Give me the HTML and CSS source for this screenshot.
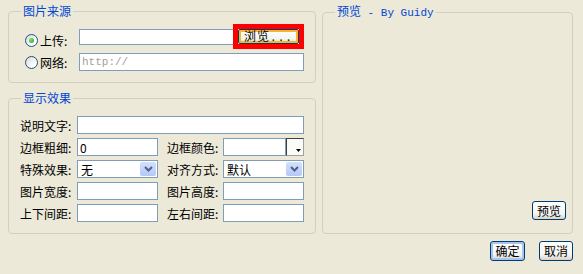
FILE: index.html
```html
<!DOCTYPE html>
<html lang="zh-CN">
<head>
    <meta charset="UTF-8">
    <title>插入图片</title>
    <link rel="stylesheet" href="styles.css">
</head>
<body>
    <div class="dialog">
        <div class="panes">
            <div class="left">
                <fieldset class="group source">
                    <legend>图片来源</legend>
                    <div class="row upload">
                        <label class="choice"><span class="dot on"></span>上传:</label>
                        <input type="text" class="field path">
                        <span class="mark"><button class="btn browse">浏览<span class="mono">...</span></button></span>
                    </div>
                    <div class="row">
                        <label class="choice"><span class="dot"></span>网络:</label>
                        <input type="text" class="field url" placeholder="http://">
                    </div>
                </fieldset>

                <fieldset class="group effect">
                    <legend>显示效果</legend>
                    <div class="grid">
                        <label>说明文字:</label>
                        <input type="text" class="field wide">

                        <label>边框粗细:</label>
                        <input type="text" class="field" value="0">
                        <label class="second">边框颜色:</label>
                        <div class="color">
                            <input type="text" class="field">
                            <span class="pick">
                                <svg width="5" height="3" viewBox="0 0 5 3"><path d="M0 0h5L2.5 3z" fill="#000"/></svg>
                            </span>
                        </div>

                        <label>特殊效果:</label>
                        <div class="select">
                            <span class="value">无</span>
                            <span class="drop"><svg width="9" height="6" viewBox="0 0 9 6"><path d="M1 1l3.5 3.5L8 1" fill="none" stroke="#4D6185" stroke-width="2"/></svg></span>
                        </div>
                        <label class="second">对齐方式:</label>
                        <div class="select">
                            <span class="value">默认</span>
                            <span class="drop"><svg width="9" height="6" viewBox="0 0 9 6"><path d="M1 1l3.5 3.5L8 1" fill="none" stroke="#4D6185" stroke-width="2"/></svg></span>
                        </div>

                        <label>图片宽度:</label>
                        <input type="text" class="field">
                        <label class="second">图片高度:</label>
                        <input type="text" class="field">

                        <label>上下间距:</label>
                        <input type="text" class="field">
                        <label class="second">左右间距:</label>
                        <input type="text" class="field">
                    </div>
                </fieldset>
            </div>

            <fieldset class="group preview">
                <legend>预览<span class="mono"> - By Guidy</span></legend>
                <button class="btn small">预览</button>
            </fieldset>
        </div>

        <div class="actions">
            <button class="btn small default">确定</button>
            <button class="btn small">取消</button>
        </div>
    </div>
</body>
</html>
```

FILE: styles.css
```css
body {
    margin: 0;
    background: #ECE9D8;
    font: 12px "Noto Sans CJK SC", sans-serif;
    color: #000;
}

.dialog {
    padding: 4px 10px 0 8px;
}

.panes {
    display: flex;
    gap: 6px;
}

.left {
    width: 308px;
    flex: none;
    display: flex;
    flex-direction: column;
    gap: 8px;
}

.mono {
    font-family: "Liberation Mono", monospace;
    font-size: 11px;
}

/* group boxes */
.group {
    margin: 0;
    padding: 0 11px;
    min-width: 0;
    border: 1px solid #D0D0BF;
    border-radius: 4px;
}

.group legend {
    margin-left: 1px;
    padding: 0 2px;
    line-height: 14px;
    color: #0046D5;
}

/* source */
.source {
    padding-bottom: 11px;
}

.row {
    display: flex;
    align-items: center;
}

.upload {
    margin-top: 6px;
    height: 25px;
}

.upload .choice {
    padding-top: 7px;
}

.row + .row {
    margin-top: 4px;
}

.choice {
    width: 59px;
    flex: none;
    display: flex;
    align-items: center;
}

.dot {
    width: 13px;
    height: 13px;
    margin: 0 2px 0 5px;
    box-sizing: border-box;
    border: 1px solid #1C5180;
    border-radius: 50%;
    background: linear-gradient(135deg, #D8D8D2, #FFFFFF 75%);
    display: grid;
    place-items: center;
}

.dot.on::after {
    content: "";
    width: 5px;
    height: 5px;
    border-radius: 50%;
    background: radial-gradient(circle at 35% 35%, #7CE07C, #21A121);
}

.field {
    height: 18px;
    box-sizing: border-box;
    margin: 0;
    padding: 0 2px;
    border: 1px solid #7F9DB9;
    background: #fff;
    font: inherit;
    min-width: 0;
}

.path {
    width: 160px;
    height: 16px;
}

.url {
    flex: 1;
    font-family: "Liberation Mono", monospace;
    font-size: 11px;
}

.url::placeholder {
    color: #A0A0A0;
}

.mark {
    margin-left: -4px;
    border: 5px solid #FF0000;
    display: flex;
}

/* buttons */
.btn {
    height: 20px;
    box-sizing: border-box;
    margin: 0;
    padding: 0 4px;
    border: 1px solid #003C74;
    border-radius: 3px;
    background: linear-gradient(#FFFFFF, #F4F4F0 70%, #D8D2C6);
    font: inherit;
    color: #000;
    line-height: 16px;
}

.browse {
    width: 61px;
    height: 15px;
    line-height: 12px;
    border-radius: 2px;
    box-shadow: inset 0 0 0 2px #F8B330;
    letter-spacing: 1px;
}

.small {
    width: 34px;
    padding: 0;
}

.default {
    width: 35px;
    box-shadow: inset 0 0 0 2px #A8C4F0;
}

/* effect */
.effect {
    padding-bottom: 11px;
}

.grid {
    margin-top: 11px;
    display: grid;
    grid-template-columns: 57px 81px 65px minmax(0, 1fr);
    grid-auto-rows: 18px;
    row-gap: 4px;
    align-items: center;
}

.grid .field,
.grid .select,
.grid .color {
    width: 100%;
}

.wide {
    grid-column: 2 / 5;
}

.second {
    padding-left: 9px;
}

.color {
    display: flex;
    height: 18px;
}

.color .field {
    flex: 1;
    width: auto;
}

.pick {
    width: 18px;
    height: 18px;
    flex: none;
    box-sizing: border-box;
    border: 1px solid;
    border-color: #404040 #A0A0A0 #A0A0A0 #404040;
    background: #FBFBF8;
    display: flex;
    align-items: flex-end;
    justify-content: flex-end;
    padding: 0 2px 3px 0;
}

.select {
    height: 18px;
    box-sizing: border-box;
    border: 1px solid #7F9DB9;
    background: #fff;
    display: flex;
    align-items: center;
}

.select .value {
    flex: 1;
    padding-left: 3px;
}

.drop {
    width: 16px;
    height: 14px;
    margin-right: 1px;
    border-radius: 2px;
    background: linear-gradient(#D4E0FC, #B4C8F6);
    display: grid;
    place-items: center;
}

/* preview */
.preview {
    flex: 1;
    display: flex;
    flex-direction: column;
    padding: 0 6px 13px 11px;
}

.preview .btn {
    margin-top: auto;
    align-self: flex-end;
    height: 19px;
}

.actions {
    margin-top: 7px;
    display: flex;
    justify-content: flex-end;
    gap: 14px;
}
```
